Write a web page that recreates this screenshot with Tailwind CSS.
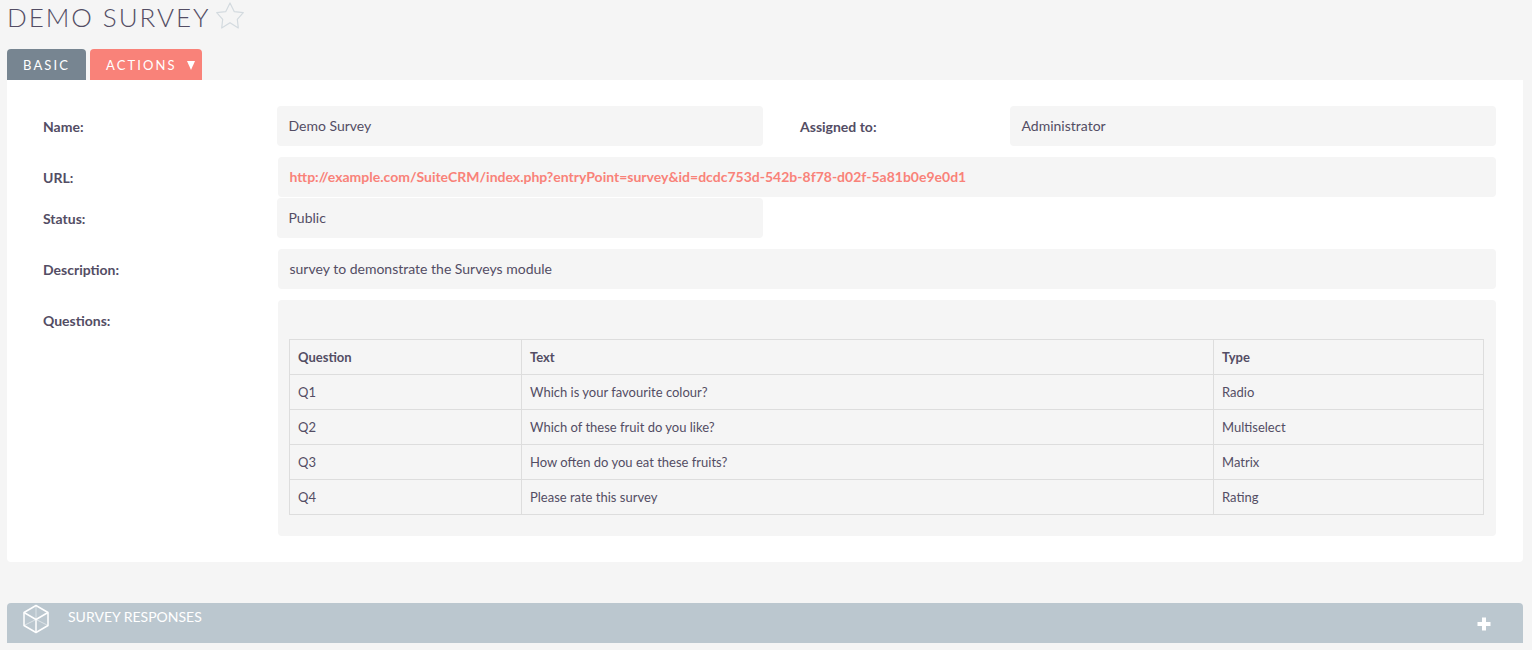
<!DOCTYPE html>
<html lang="en">
<head>
    <meta charset="UTF-8">
    <title>Demo Survey</title>
    <script src="https://cdn.jsdelivr.net/npm/@tailwindcss/browser@4"></script>
</head>
<body class="bg-[#f5f5f5] text-[#534d64] font-['Lato',sans-serif] text-[14px] h-[650px] overflow-hidden">
    <div class="px-[7px] pr-[9px]">
        <!-- title -->
        <div class="flex items-center h-[49px] pb-[15px] gap-[6px]">
            <h2 class="text-[26px] font-light tracking-[1.95px] leading-[34px] text-[#534d64]">DEMO SURVEY</h2>
            <svg width="30" height="28" viewBox="0 0 30 28" class="-mt-[2px] -ml-[1px]" fill="none" stroke="#d3dadf" stroke-width="1.2" stroke-linejoin="round"><path d="M15 1 L19.3 9.7 L28.3 10.7 L22.3 17.3 L23.3 26 L15 20.7 L6.7 26 L7.7 17.3 L1.7 10.7 L10.7 9.7 Z"/></svg>
        </div>

        <!-- tabs -->
        <div class="flex gap-[4px] h-[31px]">
            <div class="w-[79px] bg-[#778591] rounded-t-[4px] text-white text-[13px] tracking-[2.1px] flex items-center justify-center pt-[2px]">BASIC</div>
            <div class="w-[112px] h-[31px] bg-[#f98279] rounded-t-[4px] text-white text-[13px] tracking-[2.1px] flex items-center pl-[16px] justify-between pr-[7px] pt-[2px]">
                <span>ACTIONS</span>
                <svg width="8" height="9" viewBox="0 0 8 9" fill="#fff"><path d="M0 0H8L4 9Z"/></svg>
            </div>
        </div>

        <!-- detail panel -->
        <div class="bg-white rounded-b-[4px] h-[482px] pt-[26px] pl-[36px] pr-[27px]">
            <div class="flex h-[51px]">
                <div class="w-[234px] h-[40px] font-bold flex items-center">Name:</div>
                <div class="w-[486px] h-[40px] pb-[2px] bg-[#f5f5f5] rounded-[4px] flex items-center pl-[11.5px]">Demo Survey</div>
                <div class="w-[210px] ml-[37px] h-[40px] font-bold flex items-center">Assigned to:</div>
                <div class="w-[486px] h-[40px] pb-[2px] bg-[#f5f5f5] rounded-[4px] flex items-center pl-[11.5px]">Administrator</div>
            </div>
            <div class="flex h-[41px]">
                <div class="w-[235px] h-[40px] font-bold flex items-center">URL:</div>
                <div class="flex-1 h-[40px] pb-[2px] bg-[#f5f5f5] rounded-[4px] flex items-center pl-[11.5px] font-bold text-[#f98279]">http://example.com/SuiteCRM/index.php?entryPoint=survey&amp;id=dcdc753d-542b-8f78-d02f-5a81b0e9e0d1</div>
            </div>
            <div class="flex h-[51px]">
                <div class="w-[234px] h-[40px] font-bold flex items-center">Status:</div>
                <div class="w-[486px] h-[40px] pb-[2px] bg-[#f5f5f5] rounded-[4px] flex items-center pl-[11.5px]">Public</div>
            </div>
            <div class="flex h-[51px]">
                <div class="w-[235px] h-[40px] font-bold flex items-center">Description:</div>
                <div class="flex-1 h-[40px] pb-[2px] bg-[#f5f5f5] rounded-[4px] flex items-center pl-[11.5px]">survey to demonstrate the Surveys module</div>
            </div>
            <div class="flex">
                <div class="w-[235px] h-[40px] font-bold flex items-center">Questions:</div>
                <div class="flex-1 h-[236px] bg-[#f5f5f5] rounded-[4px] pt-[39px] px-[11px]">
                    <table class="w-[1195px] table-fixed border-collapse text-[13px]">
                        <colgroup>
                            <col class="w-[232px]">
                            <col class="w-[692px]">
                            <col>
                        </colgroup>
                        <thead>
                            <tr class="h-[35px] font-bold">
                                <th class="border border-[#dddddd] px-[8px] pt-[2px] text-left">Question</th>
                                <th class="border border-[#dddddd] px-[8px] pt-[2px] text-left">Text</th>
                                <th class="border border-[#dddddd] px-[8px] pt-[2px] text-left">Type</th>
                            </tr>
                        </thead>
                        <tbody>
                            <tr class="h-[35px]">
                                <td class="border border-[#dddddd] px-[8px] pt-[2px]">Q1</td>
                                <td class="border border-[#dddddd] px-[8px] pt-[2px]">Which is your favourite colour?</td>
                                <td class="border border-[#dddddd] px-[8px] pt-[2px]">Radio</td>
                            </tr>
                            <tr class="h-[35px]">
                                <td class="border border-[#dddddd] px-[8px] pt-[2px]">Q2</td>
                                <td class="border border-[#dddddd] px-[8px] pt-[2px]">Which of these fruit do you like?</td>
                                <td class="border border-[#dddddd] px-[8px] pt-[2px]">Multiselect</td>
                            </tr>
                            <tr class="h-[35px]">
                                <td class="border border-[#dddddd] px-[8px] pt-[2px]">Q3</td>
                                <td class="border border-[#dddddd] px-[8px] pt-[2px]">How often do you eat these fruits?</td>
                                <td class="border border-[#dddddd] px-[8px] pt-[2px]">Matrix</td>
                            </tr>
                            <tr class="h-[35px]">
                                <td class="border border-[#dddddd] px-[8px] pt-[2px]">Q4</td>
                                <td class="border border-[#dddddd] px-[8px] pt-[2px]">Please rate this survey</td>
                                <td class="border border-[#dddddd] px-[8px] pt-[2px]">Rating</td>
                            </tr>
                        </tbody>
                    </table>
                </div>
            </div>
        </div>

        <!-- subpanel header -->
        <div class="mt-[41px] h-[40px] bg-[#bbc7cf] rounded-t-[4px] flex justify-between pl-[15px] pr-[32px] text-white">
            <div class="flex">
                <svg width="28" height="30" viewBox="0 0 28 30" class="mt-[1px]" fill="none" stroke="#fff">
                    <path stroke-width="1.5" stroke-linejoin="round" d="M14 1.5 L26 8.5 V21.5 L14 28.5 L2 21.5 V8.5 Z"/>
                    <path stroke-width="1.5" stroke-linejoin="round" d="M2 8.5 L14 15.5 L26 8.5 M14 15.5 V28.5"/>
                    <path stroke-width="0.5" d="M2 21.5 L14 15.5 L26 21.5 M14 1.5 V15.5"/>
                </svg>
                <span class="ml-[18px] mt-[5px] leading-[18px] text-[14px]">SURVEY RESPONSES</span>
            </div>
            <svg width="14" height="14" viewBox="0 0 14 14" class="mt-[14px]" fill="#fff"><path d="M5 0.5H9V5H13.5V9H9V13.5H5V9H0.5V5H5Z"/></svg>
        </div>
    </div>
</body>
</html>
